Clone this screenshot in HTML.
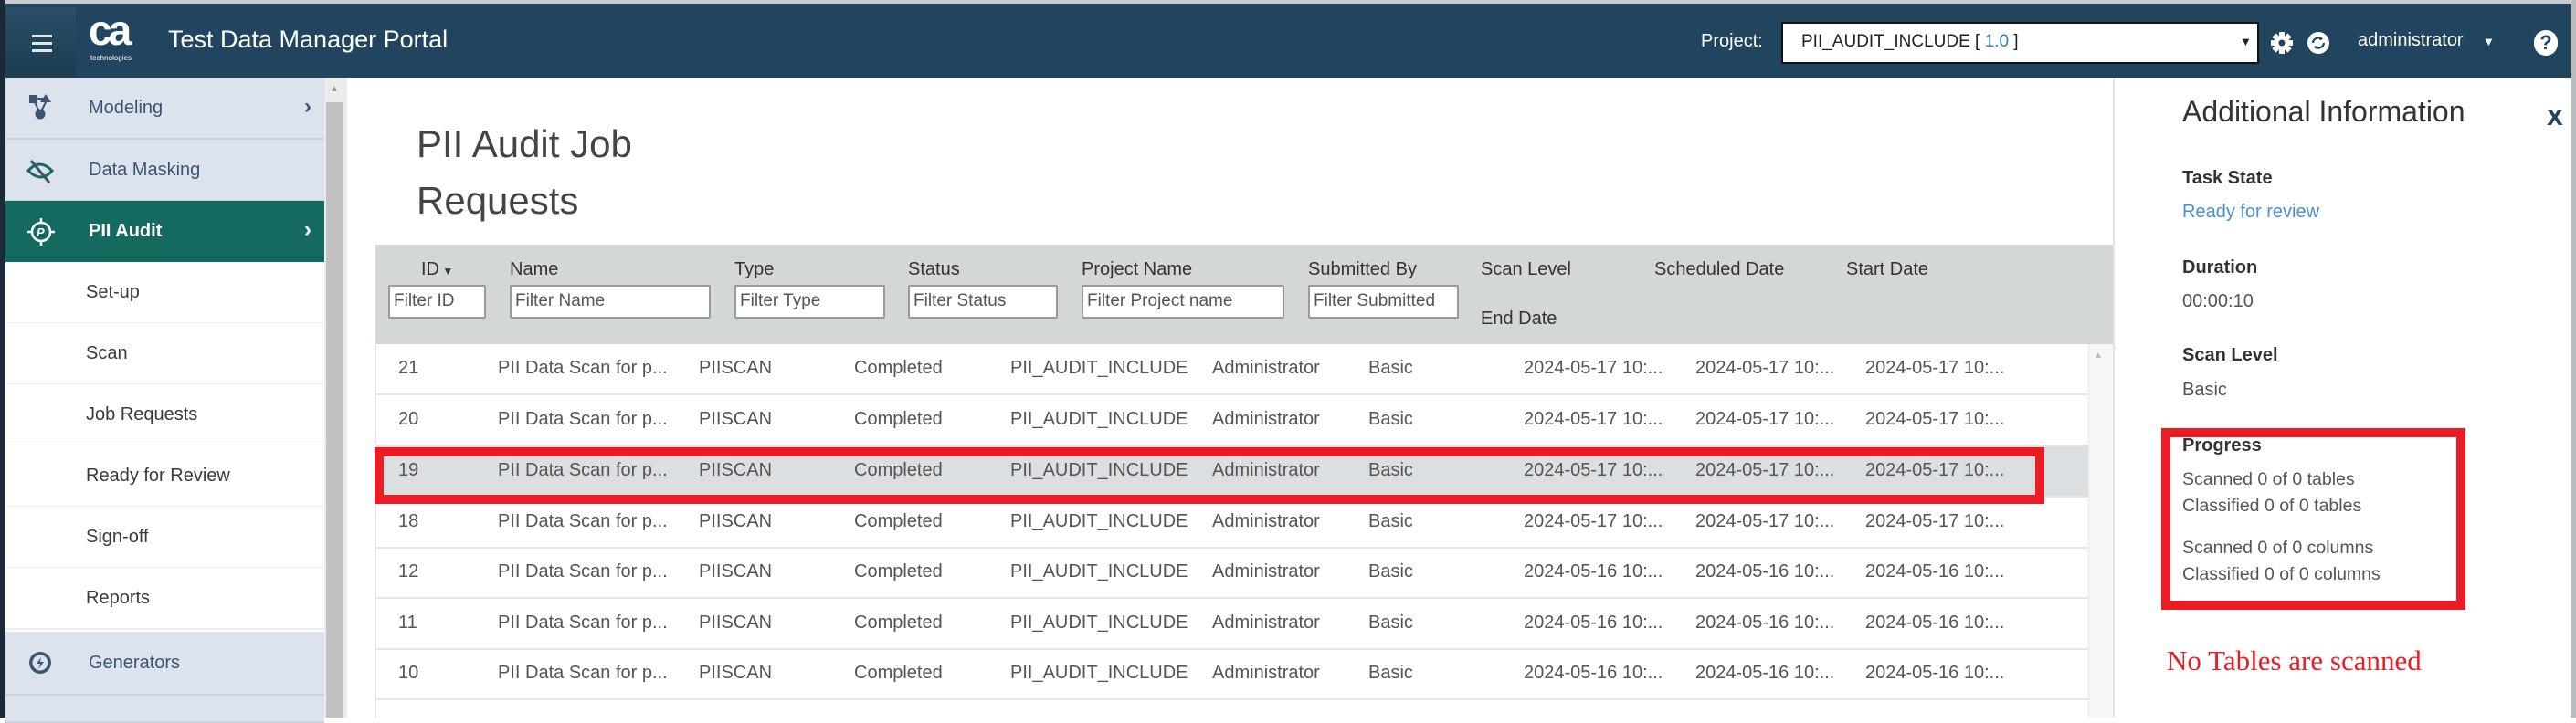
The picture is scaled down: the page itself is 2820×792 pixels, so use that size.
<!DOCTYPE html>
<html><head><meta charset="utf-8"><style>
*{margin:0;padding:0;box-sizing:border-box}
body{width:2820px;height:786px;overflow:hidden;background:#fff;font-family:"Liberation Sans",sans-serif;position:relative;color:#555}
.a{position:absolute;white-space:nowrap}
#top{left:0;top:0;width:2820px;height:4px;background:#c9cbcc}
#hdr{left:0;top:4px;width:2820px;height:81px;background:#21455f}
#lb{left:0;top:0;width:6px;height:786px;background:#1b2a38}
#rb{right:0;top:0;width:6px;height:786px;background:#b8bcbf}
.sb{left:6px;width:349px;height:68px;font-size:20px;display:flex;align-items:center}
.sub{background:#fff;color:#3a3a3a;border-bottom:2px solid #eef0f2;padding-left:88px}
.main{background:#dde3ec;color:#3d5470;border-bottom:2px solid #c9d0da;padding-left:91px}
.th{font-size:20px;color:#333}
.fi{height:37px;background:#fff;border:2px solid #9a9a9a;border-radius:2px;font-size:19px;color:#555;padding:5px 4px;overflow:hidden}
.row{left:411px;width:1875px;height:56px;border-bottom:2px solid #e6e6e6;font-size:20px;color:#555}
.row span{position:absolute;top:15px}
.rp{font-size:20px}
</style></head><body>
<div class="a" id="top"></div>
<div class="a" id="hdr"></div>
<div class="a" style="left:6px;top:8px;width:77px;height:77px;background:linear-gradient(#284f66,#1d3c50)"></div>
<div class="a" style="left:35px;top:38px;width:22px;height:3px;background:#dfe6ea"></div>
<div class="a" style="left:35px;top:46px;width:22px;height:3px;background:#dfe6ea"></div>
<div class="a" style="left:35px;top:54px;width:22px;height:3px;background:#dfe6ea"></div>
<div class="a" style="left:97px;top:6px;font-size:46px;font-weight:bold;color:#fff;letter-spacing:-4px">ca</div>
<div class="a" style="left:99px;top:59px;font-size:8px;color:#fff">technologies</div>
<div class="a" style="left:184px;top:28px;font-size:27px;color:#fff">Test Data Manager Portal</div>
<div class="a" style="left:1862px;top:34px;font-size:20px;color:#fff">Project:</div>
<div class="a" style="left:1950px;top:24px;width:523px;height:46px;background:#fff;border:2px solid #111"></div>
<div class="a" style="left:1972px;top:35px;font-size:19px;color:#222">PII_AUDIT_INCLUDE [ <span style="color:#2a7fc1">1.0</span> ]</div>
<div class="a" style="left:2452px;top:38px;font-size:13px;color:#222">▼</div>
<svg class="a" style="left:2485px;top:34px" width="26" height="26" viewBox="0 0 26 26"><g fill="#fff"><circle cx="13" cy="13" r="8"/><rect x="10" y="1" width="6" height="24"/><rect x="1" y="10" width="24" height="6"/><rect x="10" y="1" width="6" height="24" transform="rotate(45 13 13)"/><rect x="10" y="1" width="6" height="24" transform="rotate(-45 13 13)"/></g><circle cx="13" cy="13" r="3.5" fill="#21455f"/></svg>
<svg class="a" style="left:2525px;top:34px" width="26" height="26" viewBox="0 0 26 26"><circle cx="13" cy="13" r="12" fill="#fff"/><path d="M7 13a6 6 0 0 1 10-4M19 13a6 6 0 0 1-10 4" stroke="#21455f" stroke-width="2.2" fill="none"/><path d="M15 6l3 3-4 1zM11 20l-3-3 4-1z" fill="#21455f"/></svg>
<div class="a" style="left:2581px;top:33px;font-size:20px;color:#fff">administrator</div>
<div class="a" style="left:2718px;top:38px;font-size:13px;color:#fff">▼</div>
<div class="a" style="left:2774px;top:33px;width:26px;height:28px;border-radius:13px;background:#fff;color:#21455f;font-weight:bold;font-size:22px;text-align:center;line-height:28px">?</div>
<div class="a" id="lb"></div>

<div class="a sb main" style="top:85px">Modeling</div>
<div class="a sb main" style="top:153px">Data Masking</div>
<div class="a sb" style="top:220px;height:67px;background:#146a5e;color:#fff;font-weight:bold;padding-left:91px">PII Audit</div>
<div class="a sb sub" style="top:287px">Set-up</div>
<div class="a sb sub" style="top:354px">Scan</div>
<div class="a sb sub" style="top:421px">Job Requests</div>
<div class="a sb sub" style="top:488px">Ready for Review</div>
<div class="a sb sub" style="top:555px">Sign-off</div>
<div class="a sb sub" style="top:622px">Reports</div>
<div class="a sb main" style="top:692px;height:70px">Generators</div>
<div class="a sb main" style="top:762px;height:30px"></div>
<div class="a" style="left:333px;top:103px;font-size:24px;color:#3d5470;font-weight:bold">›</div>
<div class="a" style="left:333px;top:238px;font-size:24px;color:#fff;font-weight:bold">›</div>
<svg class="a" style="left:30px;top:102px" width="28" height="30" viewBox="0 0 28 30"><rect x="2" y="2" width="9" height="9" fill="#3d5470"/><path d="M20 1l6 9h-12z" fill="#3d5470"/><circle cx="14" cy="23" r="5.5" fill="#3d5470"/><path d="M7 8l7 14M21 8l-7 14M9 6h10" stroke="#3d5470" stroke-width="2" fill="none"/></svg>
<svg class="a" style="left:28px;top:172px" width="32" height="30" viewBox="0 0 32 30"><path d="M3 15q12-14 26 0q-12 14-26 0z" fill="none" stroke="#146a5e" stroke-width="3"/><path d="M6 4l20 24" stroke="#3d5470" stroke-width="3"/></svg>
<svg class="a" style="left:29px;top:238px" width="32" height="32" viewBox="0 0 32 32"><circle cx="16" cy="16" r="10" fill="none" stroke="#fff" stroke-width="2.5"/><path d="M16 1v6M16 25v6M1 16h6M25 16h6" stroke="#fff" stroke-width="2.5"/><text x="11" y="21" font-size="13" font-style="italic" font-weight="bold" fill="#fff" font-family="Liberation Sans">P</text></svg>
<svg class="a" style="left:30px;top:712px" width="28" height="28" viewBox="0 0 28 28"><circle cx="14" cy="14" r="12" fill="#3d5470"/><circle cx="14" cy="14" r="8.5" fill="#dde3ec"/><path d="M15 8l-5 7h4l-2 6 6-8h-4z" fill="#3d5470"/></svg>
<div class="a" style="left:355px;top:85px;width:25px;height:701px;background:#ececec"></div>
<div class="a" style="left:357px;top:112px;width:19px;height:674px;background:#c1c1c1"></div>
<div class="a" style="left:361px;top:92px;font-size:10px;color:#999">▲</div>

<div class="a" style="left:456px;top:134px;font-size:42px;color:#444">PII Audit Job</div>
<div class="a" style="left:456px;top:196px;font-size:42px;color:#444">Requests</div>

<div class="a" style="left:411px;top:268px;width:1902px;height:109px;background:#d4d8d5"></div>
<div class="a th" style="left:461px;top:284px">ID<span style="font-size:12px"> ▼</span></div>
<div class="a th" style="left:558px;top:284px">Name</div>
<div class="a th" style="left:804px;top:284px">Type</div>
<div class="a th" style="left:994px;top:284px">Status</div>
<div class="a th" style="left:1184px;top:284px">Project Name</div>
<div class="a th" style="left:1432px;top:284px">Submitted By</div>
<div class="a th" style="left:1621px;top:284px">Scan Level</div>
<div class="a th" style="left:1811px;top:284px">Scheduled Date</div>
<div class="a th" style="left:2021px;top:284px">Start Date</div>
<div class="a th" style="left:1621px;top:338px">End Date</div>
<div class="a fi" style="left:425px;top:312px;width:107px">Filter ID</div>
<div class="a fi" style="left:558px;top:312px;width:220px">Filter Name</div>
<div class="a fi" style="left:804px;top:312px;width:165px">Filter Type</div>
<div class="a fi" style="left:994px;top:312px;width:164px">Filter Status</div>
<div class="a fi" style="left:1184px;top:312px;width:222px">Filter Project name</div>
<div class="a fi" style="left:1432px;top:312px;width:165px">Filter Submitted</div>

<div class="a" style="left:410px;top:377px;width:2px;height:409px;background:#e6e6e6"></div>
<div class="a" style="left:2286px;top:377px;width:27px;height:409px;background:#f6f6f6;border-left:1px solid #e8e8e8"></div>
<div class="a" style="left:2292px;top:384px;font-size:10px;color:#bbb">▲</div>
<div class="a" style="left:2313px;top:85px;width:2px;height:701px;background:#e4e4e4"></div>

<div class="a row" style="top:377px"><span style="left:25px">21</span><span style="left:134px">PII Data Scan for p...</span><span style="left:354px">PIISCAN</span><span style="left:524px">Completed</span><span style="left:695px">PII_AUDIT_INCLUDE</span><span style="left:916px">Administrator</span><span style="left:1087px">Basic</span><span style="left:1257px">2024-05-17 10:...</span><span style="left:1445px">2024-05-17 10:...</span><span style="left:1631px">2024-05-17 10:...</span></div>
<div class="a row" style="top:433px"><span style="left:25px">20</span><span style="left:134px">PII Data Scan for p...</span><span style="left:354px">PIISCAN</span><span style="left:524px">Completed</span><span style="left:695px">PII_AUDIT_INCLUDE</span><span style="left:916px">Administrator</span><span style="left:1087px">Basic</span><span style="left:1257px">2024-05-17 10:...</span><span style="left:1445px">2024-05-17 10:...</span><span style="left:1631px">2024-05-17 10:...</span></div>
<div class="a row" style="top:489px;background:#dcdfe2"><span style="left:25px">19</span><span style="left:134px">PII Data Scan for p...</span><span style="left:354px">PIISCAN</span><span style="left:524px">Completed</span><span style="left:695px">PII_AUDIT_INCLUDE</span><span style="left:916px">Administrator</span><span style="left:1087px">Basic</span><span style="left:1257px">2024-05-17 10:...</span><span style="left:1445px">2024-05-17 10:...</span><span style="left:1631px">2024-05-17 10:...</span></div>
<div class="a row" style="top:545px"><span style="left:25px">18</span><span style="left:134px">PII Data Scan for p...</span><span style="left:354px">PIISCAN</span><span style="left:524px">Completed</span><span style="left:695px">PII_AUDIT_INCLUDE</span><span style="left:916px">Administrator</span><span style="left:1087px">Basic</span><span style="left:1257px">2024-05-17 10:...</span><span style="left:1445px">2024-05-17 10:...</span><span style="left:1631px">2024-05-17 10:...</span></div>
<div class="a row" style="top:600px"><span style="left:25px">12</span><span style="left:134px">PII Data Scan for p...</span><span style="left:354px">PIISCAN</span><span style="left:524px">Completed</span><span style="left:695px">PII_AUDIT_INCLUDE</span><span style="left:916px">Administrator</span><span style="left:1087px">Basic</span><span style="left:1257px">2024-05-16 10:...</span><span style="left:1445px">2024-05-16 10:...</span><span style="left:1631px">2024-05-16 10:...</span></div>
<div class="a row" style="top:656px"><span style="left:25px">11</span><span style="left:134px">PII Data Scan for p...</span><span style="left:354px">PIISCAN</span><span style="left:524px">Completed</span><span style="left:695px">PII_AUDIT_INCLUDE</span><span style="left:916px">Administrator</span><span style="left:1087px">Basic</span><span style="left:1257px">2024-05-16 10:...</span><span style="left:1445px">2024-05-16 10:...</span><span style="left:1631px">2024-05-16 10:...</span></div>
<div class="a row" style="top:711px"><span style="left:25px">10</span><span style="left:134px">PII Data Scan for p...</span><span style="left:354px">PIISCAN</span><span style="left:524px">Completed</span><span style="left:695px">PII_AUDIT_INCLUDE</span><span style="left:916px">Administrator</span><span style="left:1087px">Basic</span><span style="left:1257px">2024-05-16 10:...</span><span style="left:1445px">2024-05-16 10:...</span><span style="left:1631px">2024-05-16 10:...</span></div>
<div class="a" style="left:410px;top:490px;width:1828px;height:62px;border:10px solid #ec1c24"></div>

<div class="a" style="left:2389px;top:104px;font-size:32px;color:#333">Additional Information</div>
<div class="a" style="left:2788px;top:108px;font-size:32px;font-weight:bold;color:#21455f">x</div>
<div class="a rp" style="left:2389px;top:184px;font-weight:bold;color:#333">Task State</div>
<div class="a rp" style="left:2389px;top:221px;color:#4a8fd4">Ready for review</div>
<div class="a rp" style="left:2389px;top:282px;font-weight:bold;color:#333">Duration</div>
<div class="a rp" style="left:2389px;top:319px;color:#555">00:00:10</div>
<div class="a rp" style="left:2389px;top:378px;font-weight:bold;color:#333">Scan Level</div>
<div class="a rp" style="left:2389px;top:416px;color:#555">Basic</div>
<div class="a rp" style="left:2389px;top:477px;font-weight:bold;color:#333">Progress</div>
<div class="a rp" style="left:2389px;top:514px;color:#555;font-size:19.5px">Scanned 0 of 0 tables</div>
<div class="a rp" style="left:2389px;top:543px;color:#555;font-size:19.5px">Classified 0 of 0 tables</div>
<div class="a rp" style="left:2389px;top:589px;color:#555;font-size:19.5px">Scanned 0 of 0 columns</div>
<div class="a rp" style="left:2389px;top:618px;color:#555;font-size:19.5px">Classified 0 of 0 columns</div>
<div class="a" style="left:2366px;top:469px;width:333px;height:199px;border:10px solid #ec1c24"></div>
<div class="a" style="left:2372px;top:706px;font-family:'Liberation Serif',serif;font-size:31px;color:#ec1c24">No Tables are scanned</div>
<div class="a" id="rb"></div>
</body></html>
